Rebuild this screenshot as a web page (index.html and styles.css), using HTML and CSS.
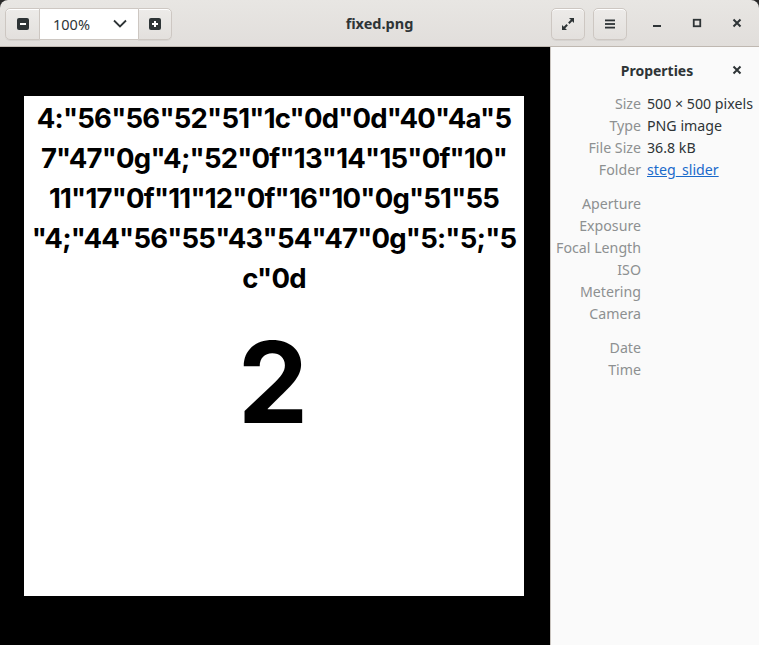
FILE: index.html
```html
<!DOCTYPE html>
<html>
<head>
<meta charset="utf-8">
<link rel="stylesheet" href="styles.css">
</head>
<body>
<div class="window">
  <header class="headerbar">
    <div class="left">
      <div class="zoom-group">
        <button class="btn icon-btn"><svg width="12" height="12" viewBox="0 0 12 12"><rect x="0" y="0" width="12" height="12" rx="2" fill="#2e3436"/><rect x="3" y="5" width="6" height="2" fill="#fff"/></svg></button>
        <div class="zoom-entry"><span>100%</span><svg width="14" height="9" viewBox="0 0 14 9"><path d="M1 1.5 L7 7.5 L13 1.5" fill="none" stroke="#2e3436" stroke-width="1.8"/></svg></div>
        <button class="btn icon-btn"><svg width="12" height="12" viewBox="0 0 12 12"><rect x="0" y="0" width="12" height="12" rx="2" fill="#2e3436"/><rect x="3" y="5" width="6" height="2" fill="#fff"/><rect x="5" y="3" width="2" height="6" fill="#fff"/></svg></button>
      </div>
    </div>
    <div class="title">fixed.png</div>
    <div class="right">
      <button class="btn single"><svg width="14" height="14" viewBox="0 0 14 14"><path d="M8 1 H13 V6 L11.2 4.2 L8.5 6.9 L7.1 5.5 L9.8 2.8 Z" fill="#2e3436"/><path d="M6 13 H1 V8 L2.8 9.8 L5.5 7.1 L6.9 8.5 L4.2 11.2 Z" fill="#2e3436"/></svg></button>
      <button class="btn single"><svg width="12" height="12" viewBox="0 0 12 12"><rect x="1" y="1.5" width="10" height="1.8" fill="#2e3436"/><rect x="1" y="5.1" width="10" height="1.8" fill="#2e3436"/><rect x="1" y="8.7" width="10" height="1.8" fill="#2e3436"/></svg></button>
      <div class="wm">
        <span class="wm-btn"><svg width="10" height="10" viewBox="0 0 10 10"><rect x="1" y="7" width="8" height="2" fill="#2e3436"/></svg></span>
        <span class="wm-btn"><svg width="10" height="10" viewBox="0 0 10 10"><rect x="1.75" y="1.75" width="6.5" height="6.5" fill="none" stroke="#2e3436" stroke-width="1.8"/></svg></span>
        <span class="wm-btn"><svg width="10" height="10" viewBox="0 0 10 10"><path d="M1.5 1.5 L8.5 8.5 M8.5 1.5 L1.5 8.5" stroke="#2e3436" stroke-width="2"/></svg></span>
      </div>
    </div>
  </header>
  <main class="content">
    <section class="viewer">
      <div class="image">
        <div class="code">
          <div>4:"56"56"52"51"1c"0d"0d"40"4a"5</div>
          <div>7"47"0g"4;"52"0f"13"14"15"0f"10"</div>
          <div>11"17"0f"11"12"0f"16"10"0g"51"55</div>
          <div>"4;"44"56"55"43"54"47"0g"5:"5;"5</div>
          <div>c"0d</div>
        </div>
        <div class="big">2</div>
      </div>
    </section>
    <aside class="sidebar">
      <div class="side-head">
        <span class="side-title">Properties</span>
        <svg class="side-close" width="10" height="10" viewBox="0 0 10 10"><path d="M1.5 1.5 L8.5 8.5 M8.5 1.5 L1.5 8.5" stroke="#2e3436" stroke-width="2"/></svg>
      </div>
      <div class="props">
        <span class="k">Size</span><span class="v">500 × 500 pixels</span>
        <span class="k">Type</span><span class="v">PNG image</span>
        <span class="k">File Size</span><span class="v">36.8 kB</span>
        <span class="k">Folder</span><span class="v link">steg_slider</span>
        <span class="k gap">Aperture</span><span class="v gap"></span>
        <span class="k">Exposure</span><span class="v"></span>
        <span class="k">Focal Length</span><span class="v"></span>
        <span class="k">ISO</span><span class="v"></span>
        <span class="k">Metering</span><span class="v"></span>
        <span class="k">Camera</span><span class="v"></span>
        <span class="k gap">Date</span><span class="v gap"></span>
        <span class="k">Time</span><span class="v"></span>
      </div>
    </aside>
  </main>
</div>
</body>
</html>
```
FILE: styles.css
```css
* { box-sizing: border-box; }
html, body { margin: 0; padding: 0; background: #2a2a2a; }
body { width: 759px; height: 645px; overflow: hidden; font-family: "Noto Sans", "Open Sans", sans-serif; }
.window { width: 759px; height: 645px; display: flex; flex-direction: column; background: #000; border-radius: 8px 8px 0 0; overflow: hidden; }
.headerbar {
  height: 47px; flex: none; display: flex; align-items: center;
  background: linear-gradient(#e8e6e3, #e1dedb);
  border-bottom: 1px solid #bfb8b1;
  padding: 0 2px 0 5px; position: relative;
}
.left { display: flex; align-items: center; }
.title { position: absolute; left: 0; right: 0; text-align: center; font-weight: bold; font-size: 14.5px; color: #2e3436; pointer-events: none; top: 13px; }
.right { margin-left: auto; display: flex; align-items: center; position: relative; z-index: 1; }
.btn {
  height: 32px; border: 1px solid #cdc7c2; background: linear-gradient(#edebe9, #e3e0dd);
  display: flex; align-items: center; justify-content: center; padding: 0; margin: 0;
  box-shadow: inset 0 1px #fff, 0 1px rgba(0,0,0,0.05);
}
.zoom-group { display: flex; margin-top: 1px; }
.icon-btn { width: 35px; }
.zoom-group .icon-btn:first-child { border-radius: 5px 0 0 5px; }
.zoom-group .icon-btn:last-child { border-radius: 0 5px 5px 0; width: 34px; }
.zoom-entry {
  width: 98px; height: 32px; background: #fff; border-top: 1px solid #cdc7c2; border-bottom: 1px solid #cdc7c2;
  display: flex; align-items: center; justify-content: space-between; padding: 0 11px 0 13px;
  font-size: 14.5px; color: #2e3436;
}
.single { width: 34px; border-radius: 5px; margin-left: 8px; margin-top: 1px; }
.right .single:first-child { margin-left: 0; }
.wm { display: flex; margin-left: 10px; margin-right: 0; }
.wm-btn { width: 40px; height: 32px; display: flex; align-items: center; justify-content: center; }
.content { flex: 1; display: flex; min-height: 0; }
.viewer { width: 550px; flex: none; background: #000; display: flex; align-items: flex-start; justify-content: center; padding-top: 49px; padding-right: 2px; }
.image { width: 500px; height: 500px; background: #fff; display: flex; flex-direction: column; align-items: center; }
.code { margin-top: 2px; font-family: "Inter", "DejaVu Sans", sans-serif; font-weight: 700; font-size: 27.5px; line-height: 40px; text-align: center; color: #000; letter-spacing: -0.8px; white-space: nowrap; }
.big { font-family: "Inter", "DejaVu Sans", sans-serif; font-weight: 700; font-size: 112px; line-height: 1; margin-top: 28px; color: #000; margin-left: -2px; }
.sidebar { flex: 1; background: #fafafa; border-left: 1px solid #c9c4bf; padding-top: 11px; }
.side-head { height: 24px; display: flex; align-items: center; justify-content: center; position: relative; }
.side-title { font-weight: bold; font-size: 14px; color: #2e3436; margin-left: 4px; }
.side-close { position: absolute; right: 17px; top: 7px; }
.props { display: grid; grid-template-columns: 90px auto; column-gap: 6px; row-gap: 0; margin-top: 11px; font-size: 14.2px; line-height: 22px; }
.k { text-align: right; color: #8d9091; }
.v { color: #2e3436; white-space: nowrap; }
.link { color: #1b6acb; text-decoration: underline; }
.gap { margin-top: 12px; }
```
